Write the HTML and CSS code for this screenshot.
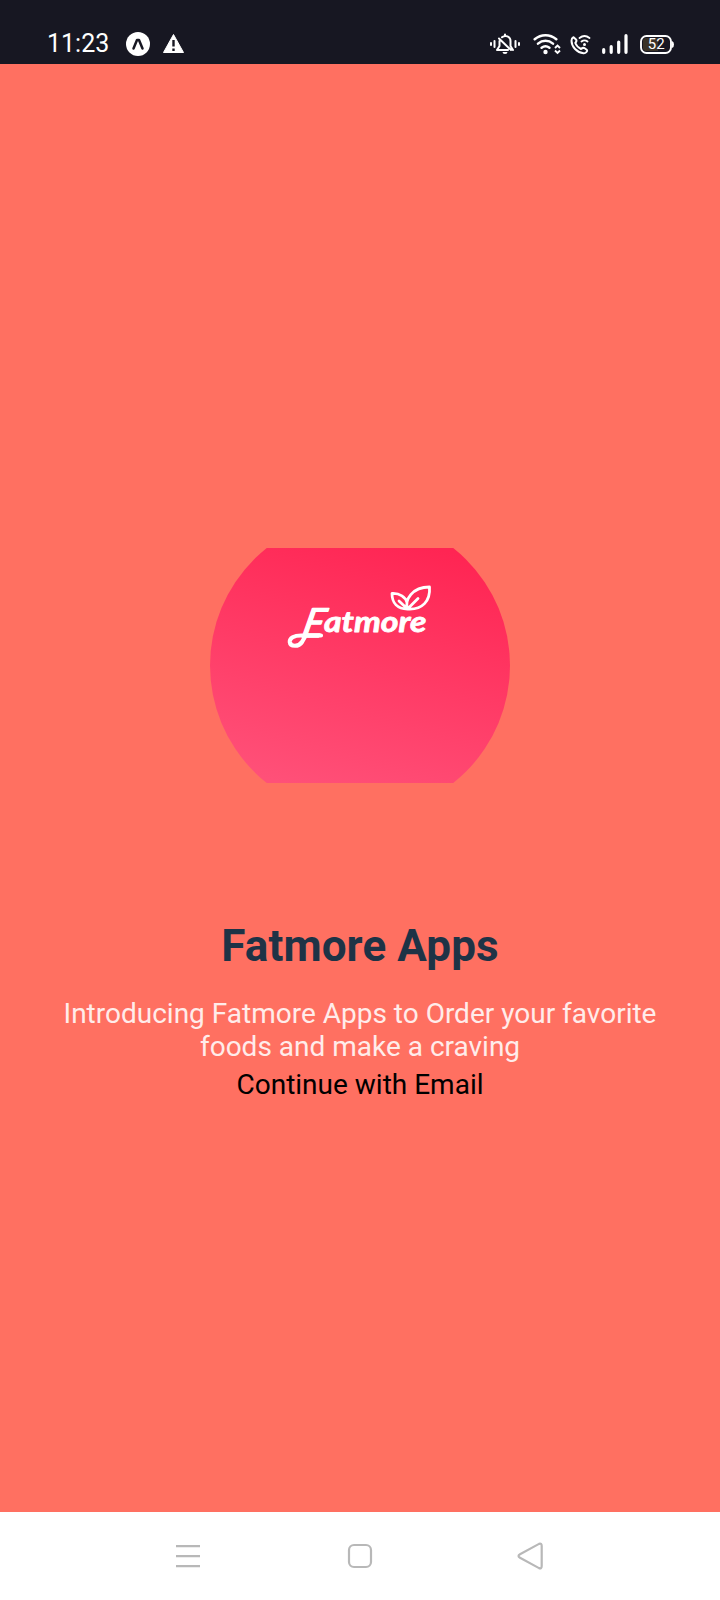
FILE: index.html
```html
<!DOCTYPE html>
<html lang="en">
<head>
<meta charset="utf-8">
<title>Fatmore Apps</title>
<link rel="stylesheet" href="styles.css">
</head>
<body>
<div class="screen">
  <header class="status">
    <div class="group">
      <span class="time">11:23</span>
      <svg class="expo" width="24" height="24" viewBox="0 0 24 24"><circle cx="12" cy="12" r="12" fill="#fff"/><path d="M7.500 16.500 11 8h2l3.500 8.500" fill="none" stroke="#171722" stroke-width="2.500" stroke-linejoin="round" stroke-linecap="round"/></svg>
      <svg width="22" height="24" viewBox="163 32 22 24"><path d="M173.500 34.500 183.500 52.500h-20z" fill="#fff" stroke="#fff" stroke-linejoin="round"/><path d="M173.500 40v6.500M173.500 48.500v2.500" stroke="#171722" stroke-width="2.400"/></svg>
    </div>
    <div class="group">
      <svg width="32" height="24" viewBox="489 32 32 24"><g fill="none" stroke="#fff" stroke-width="2" stroke-linecap="round" stroke-linejoin="round"><path d="M491 43v2M494.500 41v6M515.500 41v6M519 43v2"/><path d="M499.500 41v5l-2.500 4H508M502 37.300c3.500-3 8.500-.5 8.500 3.700v5l2.500 4M505 34.500v1M499 38.500 511 50"/></g><path d="M502.500 52h5a2.500 2 0 0 1-5 0z" fill="#fff"/></svg>
      <svg class="wifi" width="28" height="24" viewBox="533 32 28 24"><g fill="none" stroke="#fff" stroke-width="2.500" stroke-linecap="round"><path d="M534.700 39.300c6.500-5.300 15.100-5.300 21.600 0M538 43.600c4.500-3.700 10.500-3.700 15 0M541.600 47.700c2.600-2 5.200-2 7.800 0"/></g><circle cx="545.500" cy="52" r="2.200" fill="#fff"/><path d="m555 48 2.500-2.500L560 48M555 50.500l2.500 2.500 2.500-2.500" fill="none" stroke="#fff" stroke-width="1.900"/></svg>
      <svg class="call" width="22" height="24" viewBox="570 32 22 24"><g fill="none" stroke="#fff" stroke-linecap="round" stroke-linejoin="round"><path stroke-width="2" d="M573.500 37.200 576 39.500c1 1 .3 2.300-.7 3.500 1 2.600 3.200 4.800 5.700 6 1.600-1.300 2.500-1.600 3.700-.7l2.300 1.700c.8 1-1.300 3.500-3.500 3.200-6.500-.7-12-6.500-12-12.500 0-1.800 1-3 2-3.500z"/><path stroke-width="1.900" d="M579.500 38c3-2.400 7-2.400 10 0M581.500 41.500c2-1.500 4-1.500 6 0"/></g><circle cx="584.500" cy="44.500" r="1.500" fill="#fff"/></svg>
      <svg class="signal" width="26" height="24" viewBox="602 32 26 24"><path d="M603.700 49.700v2.600M611.200 46.700v5.600M618.700 42v10.300M626 35.700v16.600" stroke="#fff" stroke-width="3.200" stroke-linecap="round"/></svg>
      <svg class="battery" width="34" height="24" viewBox="640 32 34 24"><path d="M645 38h13v13h-13l-2-2v-9z" fill="#3b3327"/><rect x="641" y="36" width="30" height="17" rx="5.500" fill="none" stroke="#fff" stroke-width="1.900"/><path d="M672 41q2 .5 2 3.500t-2 3.500z" fill="#fff"/><text class="charge" x="656.300" y="49" text-anchor="middle">52</text></svg>
    </div>
  </header>
  <main class="welcome">
    <div class="logo">
      <svg width="300" height="235" viewBox="210 548 300 235">
        <defs><linearGradient id="pink" gradientUnits="userSpaceOnUse" x1="417" y1="543" x2="345" y2="800"><stop offset="0" stop-color="#ff2553"/><stop offset="1" stop-color="#ff5078"/></linearGradient></defs>
        <circle cx="360" cy="665.500" r="150" fill="url(#pink)"/>
        <text class="wordmark initial" transform="translate(300.500 637) skewX(-13)">E</text>
        <text class="wordmark" x="324" y="632" textLength="102.500" lengthAdjust="spacingAndGlyphs">atmore</text>
        <g fill="none" stroke="#fff" stroke-linecap="round" stroke-linejoin="round">
          <path stroke-width="4.200" d="M321 635.500H301c-7 0-11.500 2.500-11.200 6.500.5 5 9 5 12.200 0l4-7"/>
          <path stroke-width="2.800" d="M407.500 609c-3-9 4.500-22 22-22 1 14-7 23-22 22-10 0-15.500-6-15.500-15.500 8-.5 13.500 4 15 9M407.500 609l10.500-10.500M407.500 609l-8.500-8"/>
        </g>
      </svg>
    </div>
    <h1 class="title">Fatmore Apps</h1>
    <p class="intro">Introducing Fatmore Apps to Order your favorite foods and make a craving</p>
    <a class="continue">Continue with Email</a>
  </main>
  <nav class="nav">
    <svg width="30" height="30" viewBox="0 0 30 30"><path d="M3 5.200h24M3 15.200h24M3 25.200h24"/></svg>
    <svg width="30" height="30" viewBox="0 0 30 30"><rect x="4" y="4" width="22" height="22" rx="5"/></svg>
    <svg width="30" height="30" viewBox="0 0 30 30"><path d="M4 13.300 23 2.900Q25.700 2 25.700 5V25Q25.700 28 23 27.100L4 16.700Q1 15 4 13.300Z"/></svg>
  </nav>
</div>
</body>
</html>
```
FILE: styles.css
```css
body {
  margin: 0;
  font-family: Roboto, "Liberation Sans", sans-serif;
}
.screen {
  display: flex;
  flex-direction: column;
  width: 720px;
  height: 1600px;
  background: #ff7061;
}
.screen svg {
  display: block;
  flex: none;
}
.status {
  box-sizing: border-box;
  display: flex;
  justify-content: space-between;
  height: 64px;
  padding: 32px 46px 0 47px;
  background: #171722;
}
.group {
  display: flex;
  align-items: center;
  height: 24px;
}
.time {
  width: 79px;
  color: #fff;
  font-family: Roboto, sans-serif;
  font-size: 25px;
  font-weight: 400;
  line-height: 22px;
  letter-spacing: 0;
}
.expo {
  margin-right: 13px;
}
.wifi {
  margin-left: 12px;
}
.call {
  margin-left: 9px;
}
.signal {
  margin-left: 10px;
}
.battery {
  margin-left: 12px;
}
.charge {
  fill: #fff;
  font-size: 15px;
}
.welcome {
  display: flex;
  flex: 1;
  flex-direction: column;
  align-items: center;
}
.logo {
  margin-top: 484px;
}
.wordmark {
  fill: #fff;
  stroke: #fff;
  stroke-width: 0.8px;
  stroke-linejoin: round;
  font: italic 700 29px Lato, sans-serif;
}
.initial {
  stroke-width: 1.4px;
  font-size: 40px;
  font-weight: 400;
}
.title {
  margin: 137px 0 0;
  color: #1e3346;
  font-size: 44px;
  font-weight: 700;
  line-height: 52px;
  letter-spacing: 0.1px;
}
.intro {
  width: 640px;
  margin: 25px 0 0;
  color: #ffecea;
  font-size: 28px;
  line-height: 33px;
  text-align: center;
}
.continue {
  margin-top: 5px;
  color: #000;
  font-size: 28px;
  line-height: 33px;
}
.nav {
  box-sizing: border-box;
  display: flex;
  justify-content: space-between;
  height: 88px;
  padding: 29px 174px 0 173px;
  background: #fff;
}
.nav svg {
  fill: none;
  stroke: #b8b8b8;
  stroke-width: 2.2px;
}
```
